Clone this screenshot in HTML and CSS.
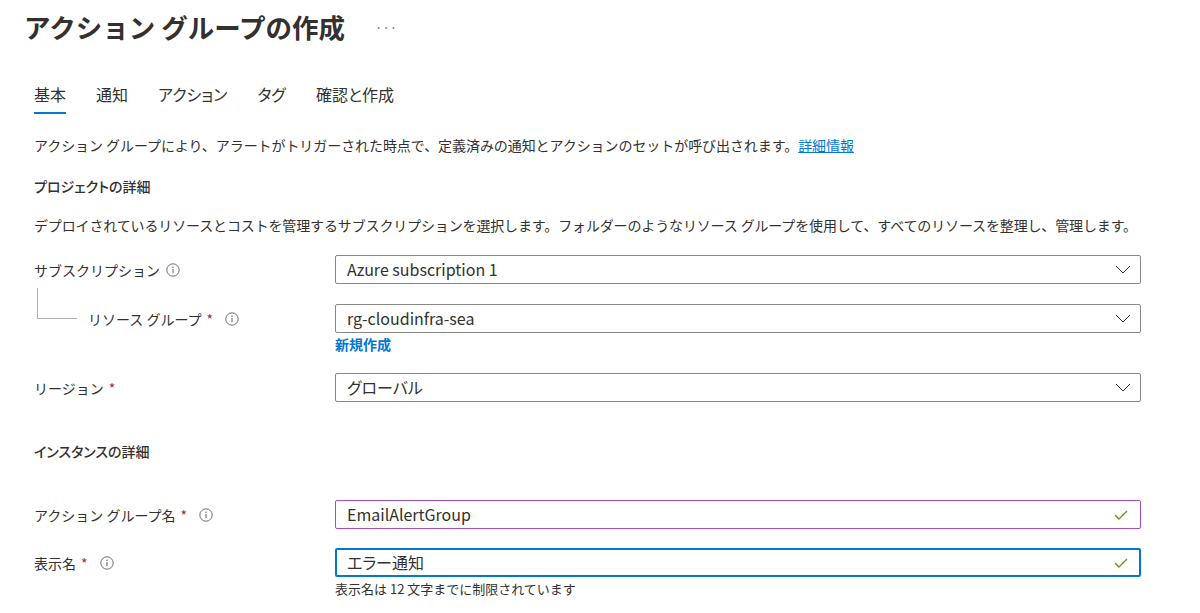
FILE: index.html
```html
<!DOCTYPE html>
<html lang="ja">
<head>
    <meta charset="UTF-8">
    <title>アクション グループの作成</title>
    <link rel="stylesheet" href="styles.css">
</head>
<body>
    <!-- Page header -->
    <header class="page-header">
        <h1 class="page-title">アクション グループの作成</h1>
        <span class="more">···</span>
    </header>

    <div class="content">
        <!-- Wizard tabs -->
        <nav class="tabs">
            <span class="tab active">基本</span>
            <span class="tab">通知</span>
            <span class="tab">アクション</span>
            <span class="tab">タグ</span>
            <span class="tab">確認と作成</span>
        </nav>

        <p class="intro">アクション グループにより、アラートがトリガーされた時点で、定義済みの通知とアクションのセットが呼び出されます。<a href="#" class="link">詳細情報</a></p>

        <!-- Project details -->
        <h2 class="section-title">プロジェクトの詳細</h2>
        <p class="section-desc">デプロイされているリソースとコストを管理するサブスクリプションを選択します。フォルダーのようなリソース グループを使用して、すべてのリソースを整理し、管理します。</p>

        <div class="form-row">
            <div class="field-label">
                サブスクリプション
                <svg class="info info-near" width="14" height="14" viewBox="0 0 14 14"><circle cx="7" cy="7" r="6.2" fill="none" stroke="#605e5c" stroke-width="0.9"/><line x1="7" y1="6" x2="7" y2="10.2" stroke="#605e5c" stroke-width="1"/><circle cx="7" cy="4.2" r="0.7" fill="#605e5c"/></svg>
            </div>
            <div class="field">
                <div class="select">
                    <span>Azure subscription 1</span>
                    <svg class="chevron" width="16" height="9" viewBox="0 0 16 9"><polyline points="1,1 8,8 15,1" fill="none" stroke="#323130" stroke-width="1"/></svg>
                </div>
            </div>
        </div>

        <div class="form-row">
            <div class="field-label nested">
                <span class="tree-line"></span>
                リソース グループ<span class="required">*</span>
                <svg class="info" width="14" height="14" viewBox="0 0 14 14"><circle cx="7" cy="7" r="6.2" fill="none" stroke="#605e5c" stroke-width="0.9"/><line x1="7" y1="6" x2="7" y2="10.2" stroke="#605e5c" stroke-width="1"/><circle cx="7" cy="4.2" r="0.7" fill="#605e5c"/></svg>
            </div>
            <div class="field">
                <div class="select">
                    <span>rg-cloudinfra-sea</span>
                    <svg class="chevron" width="16" height="9" viewBox="0 0 16 9"><polyline points="1,1 8,8 15,1" fill="none" stroke="#323130" stroke-width="1"/></svg>
                </div>
                <a href="#" class="create-link">新規作成</a>
            </div>
        </div>

        <div class="form-row">
            <div class="field-label">
                リージョン<span class="required">*</span>
            </div>
            <div class="field">
                <div class="select">
                    <span>グローバル</span>
                    <svg class="chevron" width="16" height="9" viewBox="0 0 16 9"><polyline points="1,1 8,8 15,1" fill="none" stroke="#323130" stroke-width="1"/></svg>
                </div>
            </div>
        </div>

        <!-- Instance details -->
        <h2 class="section-title instance-title">インスタンスの詳細</h2>

        <div class="form-row">
            <div class="field-label">
                アクション グループ名<span class="required">*</span>
                <svg class="info" width="14" height="14" viewBox="0 0 14 14"><circle cx="7" cy="7" r="6.2" fill="none" stroke="#605e5c" stroke-width="0.9"/><line x1="7" y1="6" x2="7" y2="10.2" stroke="#605e5c" stroke-width="1"/><circle cx="7" cy="4.2" r="0.7" fill="#605e5c"/></svg>
            </div>
            <div class="field">
                <div class="text-input hovered">
                    <span>EmailAlertGroup</span>
                    <svg class="check" width="14" height="10" viewBox="0 0 14 10"><polyline points="1,5 5,9 13,1" fill="none" stroke="#57a300" stroke-width="1.3"/></svg>
                </div>
            </div>
        </div>

        <div class="form-row row-tight">
            <div class="field-label">
                表示名<span class="required">*</span>
                <svg class="info" width="14" height="14" viewBox="0 0 14 14"><circle cx="7" cy="7" r="6.2" fill="none" stroke="#605e5c" stroke-width="0.9"/><line x1="7" y1="6" x2="7" y2="10.2" stroke="#605e5c" stroke-width="1"/><circle cx="7" cy="4.2" r="0.7" fill="#605e5c"/></svg>
            </div>
            <div class="field">
                <div class="text-input focused">
                    <span>エラー通知</span>
                    <svg class="check" width="14" height="10" viewBox="0 0 14 10"><polyline points="1,5 5,9 13,1" fill="none" stroke="#57a300" stroke-width="1.3"/></svg>
                </div>
                <div class="hint">表示名は 12 文字までに制限されています</div>
            </div>
        </div>
    </div>
</body>
</html>
```

FILE: styles.css
```css
/* Base page */
body {
    margin: 0;
    font-family: "Noto Sans CJK JP", sans-serif;
    font-size: 14px;
    color: #323130;
    background: #fff;
}

/* Header with title and "more" dots */
.page-header {
    display: flex;
    align-items: center;
    padding: 10px 0 0 24px;
    height: 34px;
}

.page-title {
    margin: 0;
    font-size: 26.5px;
    font-weight: 600;
    line-height: 34px;
}

.more {
    margin-left: 30px;
    font-size: 13px;
    color: #605e5c;
}

.content {
    padding: 0 34px;
}

/* Tabs */
.tabs {
    display: flex;
    gap: 30px;
    margin-top: 38px;
}

.tab {
    font-size: 16px;
    line-height: 24px;
    padding-bottom: 6px;
    border-bottom: 2px solid transparent;
    font-feature-settings: "palt";
}

.tab.active {
    border-bottom-color: #0078d4;
}

/* Paragraphs and headings */
.intro {
    margin: 21px 0 0;
    line-height: 20px;
    letter-spacing: -0.07px;
}

.link {
    color: #0078d4;
    text-decoration: underline;
}

.section-title {
    margin: 21px 0 0;
    font-size: 14px;
    font-weight: 500;
    line-height: 20px;
    font-feature-settings: "palt";
}

.section-desc {
    margin: 19px 0 0;
    line-height: 20px;
    letter-spacing: -0.14px;
}

.instance-title {
    margin-top: 39px;
}

/* Form rows */
.form-row {
    display: grid;
    grid-template-columns: 301px 806px;
    margin-top: 20px;
}

.instance-title + .form-row {
    margin-top: 39px;
}

.row-tight {
    margin-top: 19px;
}

.field-label {
    display: flex;
    align-items: center;
    height: 29px;
    white-space: nowrap;
}

.field-label.nested {
    padding-left: 3px;
}

/* connector from subscription to resource group */
.tree-line {
    align-self: flex-start;
    width: 39px;
    height: 14px;
    margin-top: -16px;
    margin-right: 11px;
    padding-top: 16px;
    border-left: 1px solid #b3b0ad;
    border-bottom: 1px solid #b3b0ad;
}

.required {
    color: #a4262c;
    margin-left: 5px;
}

.info {
    margin-left: 12px;
}

.info.info-near {
    margin-left: 6px;
}

/* Dropdowns and text boxes */
.select, .text-input {
    display: flex;
    align-items: center;
    justify-content: space-between;
    box-sizing: border-box;
    height: 29px;
    padding: 0 10px 2px 11px;
    border: 1px solid #8a8886;
    border-radius: 2px;
    font-size: 16px;
    font-feature-settings: "palt";
}

.select svg, .text-input svg {
    margin-top: 2px;
}

.text-input.hovered {
    border-color: #a14fc0;
}

.text-input.focused {
    border: 2px solid #0078d4;
    padding-left: 10px;
    padding-right: 9px;
}

.chevron {
    margin-right: -1px;
}

.check {
    margin-right: 2px;
}

.create-link {
    display: block;
    margin-top: 2px;
    line-height: 18px;
    color: #0078d4;
    font-weight: 600;
    text-decoration: none;
}

.hint {
    margin-top: 4px;
    font-size: 13px;
    line-height: 16px;
}
```
